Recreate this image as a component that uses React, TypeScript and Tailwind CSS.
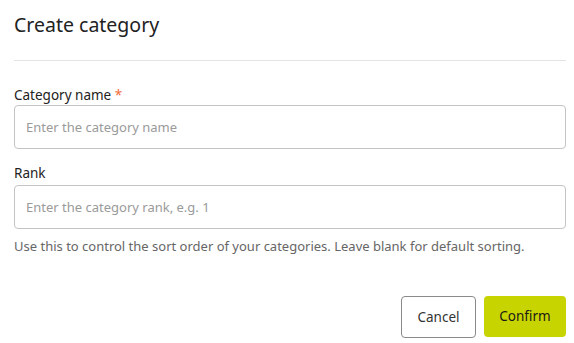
import React from "react";

export default function App() {
  return (
    <div
      className="w-[574px] h-[343px] bg-white pl-[14px] pr-[8px] text-[#222]"
      style={{ fontFamily: '"Noto Sans", "Open Sans", sans-serif' }}
    >
      <div className="h-[61px] border-b border-[#e3e3e3] pt-[11px]">
        <h1 className="text-[19.5px] leading-[28px] font-normal text-[#222]">Create category</h1>
      </div>
      <div className="mt-[24px]">
        <label className="block text-[13.5px] leading-[20px] text-[#222]">
          Category name <span className="text-[#f26b3a]">*</span>
        </label>
        <input
          className="block w-full h-[44px] rounded-[4px] border border-[#c4c4c4] px-[11px] text-[13px] placeholder:text-[#9a9a9a] outline-none"
          placeholder="Enter the category name"
        />
      </div>
      <div className="mt-[14px]">
        <label className="block text-[13.5px] leading-[20px] mb-[2px] text-[#222]">Rank</label>
        <input
          className="block w-full h-[44px] rounded-[4px] border border-[#c4c4c4] px-[11px] text-[13px] placeholder:text-[#9a9a9a] outline-none"
          placeholder="Enter the category rank, e.g. 1"
        />
        <p className="mt-[8px] text-[13px] leading-[18px] text-[#666]">
          Use this to control the sort order of your categories. Leave blank for default sorting.
        </p>
      </div>
      <div className="mt-[41px] flex justify-end gap-[8px]">
        <button className="h-[42px] w-[75px] rounded-[4px] border border-[#8a8a8a] bg-white text-[13.5px] text-[#333]">
          Cancel
        </button>
        <button className="h-[41px] w-[82px] rounded-[4px] bg-[#c8d400] text-[13.5px] text-[#1a1a1a]">
          Confirm
        </button>
      </div>
    </div>
  );
}
